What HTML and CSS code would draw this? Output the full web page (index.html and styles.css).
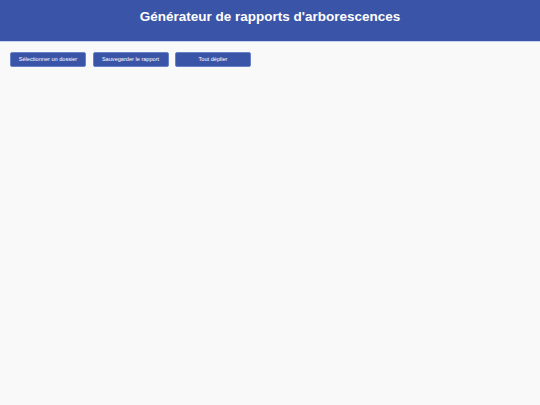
FILE: index.html
```html
<!DOCTYPE html>
<html lang="fr">
<head>
<meta charset="utf-8">
<title>Générateur de rapports d'arborescences</title>
<link rel="stylesheet" href="styles.css">
</head>
<body>
<header class="header">
  <h1 class="title">Générateur de rapports d'arborescences</h1>
</header>
<main class="main">
  <div class="toolbar">
    <button class="btn">Sélectionner un dossier</button>
    <button class="btn">Sauvegarder le rapport</button>
    <button class="btn">Tout déplier</button>
  </div>
</main>
</body>
</html>
```
FILE: styles.css
```css
html, body {
  margin: 0;
  padding: 0;
}
body {
  background: #f9f9f9;
  font-family: "Liberation Sans", Arial, sans-serif;
  min-height: 405px;
}
.header {
  background: #3a55a7;
  height: 41px;
  border-bottom: 1px solid #c9d3ef;
  box-sizing: content-box;
  display: flex;
  justify-content: center;
}
.title {
  margin: 0;
  padding-top: 7.5px;
  color: #ffffff;
  font-size: 13.5px;
  line-height: 17px;
  font-weight: bold;
}
.main {
  padding: 10px 10px;
}
.toolbar {
  display: flex;
  gap: 6.5px;
}
.btn {
  width: 76px;
  height: 15px;
  padding: 0;
  background: #3a55a7;
  color: #ffffff;
  border: 1px solid #6a82c8;
  border-radius: 2px;
  font-family: "Liberation Sans", Arial, sans-serif;
  font-size: 5.6px;
  line-height: 13px;
  box-sizing: border-box;
}
```
